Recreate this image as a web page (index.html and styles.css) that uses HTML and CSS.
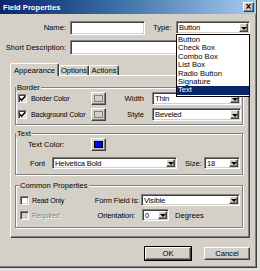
FILE: index.html
```html
<!DOCTYPE html>
<html lang="en">

<head>
    <meta charset="UTF-8">
    <title>Field Properties</title>
    <link rel="stylesheet" href="styles.css">
</head>

<body>

    <div class="dialog">
        <div class="titlebar">
            <span class="title">Field Properties</span>
            <span class="close">&times;</span>
        </div>

        <div class="row row-name">
            <span class="lbl">Name:</span>
            <div class="input name-input"></div>
            <span class="lbl-type">Type:</span>
            <div class="type-wrap">
                <div class="select type-select"><span class="val">Button</span><span class="arrow"></span></div>
                <ul class="droplist">
                    <li>Button</li>
                    <li>Check Box</li>
                    <li>Combo Box</li>
                    <li>List Box</li>
                    <li>Radio Button</li>
                    <li>Signature</li>
                    <li class="selected">Text</li>
                </ul>
            </div>
        </div>

        <div class="row row-desc">
            <span class="lbl">Short Description:</span>
            <div class="input desc-input"></div>
        </div>

        <div class="tabs">
            <div class="tab active">Appearance</div>
            <div class="tab">Options</div>
            <div class="tab">Actions</div>
        </div>

        <div class="panel">
            <!-- Border -->
            <div class="group g-border">
                <span class="group-title">Border</span>
                <div class="grow">
                    <div class="check-col">
                        <span class="check"><svg width="7" height="7" viewBox="0 0 7 7"><path d="M0.8 3.2 L2.7 5.2 L6.3 1.3" fill="none" stroke="#000" stroke-width="1.6"/></svg></span>
                        <span class="ck-text">Border Color</span>
                    </div>
                    <span class="swatch"><span class="chip"></span></span>
                    <span class="lbl-r">Width</span>
                    <div class="select w-select"><span class="val">Thin</span><span class="arrow"></span></div>
                </div>
                <div class="grow grow-2">
                    <div class="check-col">
                        <span class="check"><svg width="7" height="7" viewBox="0 0 7 7"><path d="M0.8 3.2 L2.7 5.2 L6.3 1.3" fill="none" stroke="#000" stroke-width="1.6"/></svg></span>
                        <span class="ck-text">Background Color</span>
                    </div>
                    <span class="swatch"><span class="chip"></span></span>
                    <span class="lbl-r">Style</span>
                    <div class="select w-select"><span class="val">Beveled</span><span class="arrow"></span></div>
                </div>
            </div>

            <!-- Text -->
            <div class="group g-text">
                <span class="group-title">Text</span>
                <div class="grow">
                    <span class="tc-lbl">Text Color:</span>
                    <span class="swatch"><span class="chip blue"></span></span>
                </div>
                <div class="grow font-row">
                    <span class="font-lbl">Font</span>
                    <div class="select font-select"><span class="val">Helvetica Bold</span><span class="arrow"></span></div>
                    <span class="size-lbl">Size:</span>
                    <div class="select size-select"><span class="val">18</span><span class="arrow"></span></div>
                </div>
            </div>

            <!-- Common Properties -->
            <div class="group g-common">
                <span class="group-title">Common Properties</span>
                <div class="grow">
                    <div class="check-col cp-col">
                        <span class="check"></span>
                        <span class="ck-text">Read Only</span>
                    </div>
                    <span class="cp-lbl">Form Field Is:</span>
                    <div class="select vis-select"><span class="val">Visible</span><span class="arrow"></span></div>
                </div>
                <div class="grow grow-2">
                    <div class="check-col cp-col">
                        <span class="check disabled"></span>
                        <span class="ck-text dim">Required</span>
                    </div>
                    <span class="cp-lbl or-lbl">Orientation:</span>
                    <div class="select or-select"><span class="val">0</span><span class="arrow"></span></div>
                    <span class="deg">Degrees</span>
                </div>
            </div>
        </div>

        <div class="btn-row">
            <div class="btn default">OK</div>
            <div class="btn">Cancel</div>
        </div>
    </div>

</body>

</html>
```

FILE: styles.css
```css
* {
    box-sizing: border-box;
}

body {
    margin: 0;
    background: #e2e0dc;
    font-family: "Liberation Sans", Arial, sans-serif;
    font-size: 7.6px;
    color: #000;
}

.dialog {
    width: 257px;
    height: 268px;
    background: #d4d0c8;
    border-right: 1px solid #404040;
    border-bottom: 1px solid #404040;
    box-shadow: inset -1px -1px #808080;
}

.titlebar {
    height: 14px;
    display: flex;
    align-items: center;
    padding: 0 2px 0 3px;
    background: linear-gradient(90deg, #0a246a 0%, #3a6ea5 45%, #a6caf0 100%);
    color: #fff;
    font-weight: bold;
}

.close {
    margin-left: auto;
    width: 11px;
    height: 10px;
    background: #d4d0c8;
    border: 1px solid;
    border-color: #fff #404040 #404040 #fff;
    box-shadow: inset -1px -1px #808080;
    color: #000;
    font-size: 10px;
    font-weight: bold;
    line-height: 7px;
    text-align: center;
}

.row {
    display: flex;
    align-items: center;
}

.row-name {
    height: 14px;
    margin-top: 7px;
    align-items: flex-start;
}

.row-name .lbl {
    line-height: 14px;
}

.lbl {
    width: 66px;
    text-align: right;
    margin-right: 4px;
}

.input {
    background: #fff;
    border: 1px solid;
    border-color: #808080 #fff #fff #808080;
    box-shadow: inset 1px 1px #404040, inset -1px -1px #d4d0c8;
}

.name-input {
    width: 75px;
    height: 14px;
}

.lbl-type {
    width: 23px;
    margin-left: 8px;
    line-height: 13px;
}

.type-wrap {
    position: relative;
    width: 74px;
    height: 13px;
}

.select {
    display: flex;
    align-items: stretch;
    height: 13px;
    background: #fff;
    border: 1px solid;
    border-color: #808080 #fff #fff #808080;
    box-shadow: inset 1px 1px #404040, inset -1px -1px #d4d0c8;
    padding: 1px;
}

.select .val {
    flex: 1;
    padding-left: 1px;
    display: flex;
    align-items: center;
    white-space: nowrap;
    overflow: hidden;
    letter-spacing: -0.15px;
}

.arrow {
    width: 9px;
    background: #d4d0c8;
    border: 1px solid;
    border-color: #fff #404040 #404040 #fff;
    box-shadow: inset -1px -1px #808080;
    display: flex;
    align-items: center;
    justify-content: center;
}

.arrow::after {
    content: "";
    border-top: 3px solid #000;
    border-left: 3px solid transparent;
    border-right: 3px solid transparent;
    margin-top: 1px;
}

.droplist {
    position: absolute;
    top: 13px;
    left: 0;
    width: 74px;
    margin: 0;
    padding: 1px 0 1px;
    list-style: none;
    background: #fff;
    border: 1px solid #000;
    z-index: 2;
}

.droplist li {
    height: 8.4px;
    line-height: 8.4px;
    padding-left: 1px;
}

.droplist .selected {
    background: #0a246a;
    color: #fff;
}

.row-desc {
    height: 15px;
    margin-top: 5px;
}

.desc-input {
    width: 180px;
    height: 15px;
}

/* tabs */
.tabs {
    display: flex;
    align-items: flex-end;
    height: 12px;
    margin: 8px 0 0 10px;
    position: relative;
    z-index: 1;
}

.tab {
    height: 10px;
    display: flex;
    align-items: center;
    justify-content: center;
    background: #d4d0c8;
    border: 1px solid;
    border-bottom: none;
    border-color: #fff #404040 #404040 #fff;
    border-radius: 2px 2px 0 0;
    box-shadow: inset -1px 0 #808080;
    width: 30px;
}

.tab.active {
    width: 49px;
    height: 13px;
    margin-bottom: -1px;
}

.panel {
    margin-left: 10px;
    width: 240px;
    height: 163px;
    border: 1px solid;
    border-color: #fff #404040 #404040 #fff;
    box-shadow: inset -1px -1px #808080;
    padding: 11px 0 0 4px;
}

.group {
    position: relative;
    width: 228px;
    border: 1px solid #808080;
    box-shadow: inset 1px 1px #fff, 1px 1px #fff;
}

.group-title {
    position: absolute;
    top: -5px;
    left: 0;
    padding: 0 1px;
    line-height: 9px;
    background: #d4d0c8;
}

.g-border {
    height: 38px;
    padding-top: 4px;
}

.g-text {
    height: 42px;
    margin-top: 8px;
    padding-top: 4px;
}

.g-common {
    height: 43px;
    margin-top: 10px;
    padding-top: 8px;
}

.g-common .group-title {
    left: 3px;
}

.grow {
    display: flex;
    align-items: center;
    height: 13px;
}

.grow-2 {
    margin-top: 3px;
}

.g-common .grow {
    height: 12px;
}

.check-col {
    width: 75px;
    padding-left: 2px;
    display: flex;
    align-items: center;
    white-space: nowrap;
}

.ck-text {
    font-size: 7.2px;
    letter-spacing: -0.2px;
}

.check {
    width: 9px;
    height: 9px;
    margin-right: 4px;
    background: #fff;
    border: 1px solid;
    border-color: #808080 #fff #fff #808080;
    box-shadow: inset 1px 1px #404040, inset -1px -1px #d4d0c8;
    display: flex;
    align-items: center;
    justify-content: center;
}

.check.disabled {
    background: #d4d0c8;
}

.dim {
    color: #808080;
    text-shadow: 1px 1px #fff;
}

.swatch {
    width: 15px;
    height: 13px;
    padding: 2px;
    background: #d4d0c8;
    border: 1px solid;
    border-color: #fff #404040 #404040 #fff;
    box-shadow: inset -1px -1px #808080;
}

.chip {
    display: block;
    width: 100%;
    height: 100%;
    border: 1px solid #808080;
    background: #d4d0c8;
}

.chip.blue {
    background: #0000ff;
    border-color: #000;
}

.lbl-r {
    width: 39px;
    padding-right: 1px;
    margin-right: 7px;
    text-align: right;
}

.w-select {
    width: 89px;
}

.tc-lbl {
    width: 75px;
    padding-left: 12px;
}

.font-row {
    height: 12px;
    margin-top: 6px;
}

.font-row .select {
    height: 12px;
}

.font-lbl {
    width: 36px;
    padding-left: 14px;
}

.font-select {
    width: 125px;
}

.size-lbl {
    width: 19px;
    margin-left: 8px;
}

.size-select {
    width: 36px;
}

.cp-col {
    width: 72px;
    padding-left: 4px;
}

.cp-col .check {
    margin-right: 3px;
}

.cp-lbl {
    width: 51px;
    margin-right: 2px;
    text-align: right;
    white-space: nowrap;
    letter-spacing: -0.15px;
}

.or-lbl {
    padding-right: 4px;
    margin-right: 3px;
}

.g-common .select {
    height: 12px;
}

.vis-select {
    width: 99px;
}

.or-select {
    width: 27px;
}

.deg {
    margin-left: 6px;
}

.btn-row {
    display: flex;
    justify-content: flex-end;
    gap: 13px;
    margin-top: 9px;
    padding-right: 6px;
}

.btn {
    width: 46px;
    height: 13px;
    display: flex;
    align-items: center;
    justify-content: center;
    background: #d4d0c8;
    border: 1px solid;
    border-color: #fff #404040 #404040 #fff;
    box-shadow: inset -1px -1px #808080;
}

.btn.default {
    outline: 1px solid #000;
}
```
